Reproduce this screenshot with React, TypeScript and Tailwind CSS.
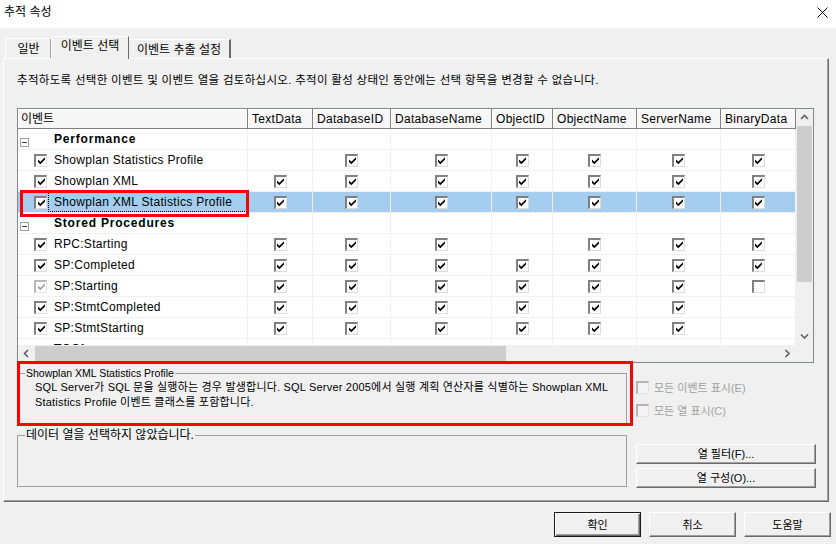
import React from "react";

type Cell = 0 | 1 | 2; // 0 = nothing, 1 = checked, 2 = empty box

type Row =
  | { kind: "cat"; label: string }
  | { kind: "ev"; label: string; cells: Cell[]; selected?: boolean; muted?: boolean };

const COLUMNS = [
  { name: "TextData", width: "w-[65px]" },
  { name: "DatabaseID", width: "w-[78px]" },
  { name: "DatabaseName", width: "w-[101px]" },
  { name: "ObjectID", width: "w-[61px]" },
  { name: "ObjectName", width: "w-[84px]" },
  { name: "ServerName", width: "w-[84px]" },
  { name: "BinaryData", width: "w-[75px]" },
];

const ROWS: Row[] = [
  { kind: "cat", label: "Performance" },
  { kind: "ev", label: "Showplan Statistics Profile", cells: [0, 1, 1, 1, 1, 1, 1] },
  { kind: "ev", label: "Showplan XML", cells: [1, 1, 1, 1, 1, 1, 1] },
  { kind: "ev", label: "Showplan XML Statistics Profile", cells: [1, 1, 1, 1, 1, 1, 1], selected: true },
  { kind: "cat", label: "Stored Procedures" },
  { kind: "ev", label: "RPC:Starting", cells: [1, 1, 1, 0, 1, 1, 1] },
  { kind: "ev", label: "SP:Completed", cells: [1, 1, 1, 1, 1, 1, 1] },
  { kind: "ev", label: "SP:Starting", cells: [1, 1, 1, 1, 1, 1, 2], muted: true },
  { kind: "ev", label: "SP:StmtCompleted", cells: [1, 1, 1, 1, 1, 1, 0] },
  { kind: "ev", label: "SP:StmtStarting", cells: [1, 1, 1, 1, 1, 1, 0] },
  { kind: "cat", label: "TSQL" },
];

function Check({ checked = true, muted = false }: { checked?: boolean; muted?: boolean }) {
  return (
    <span
      className={`flex h-[13px] w-[13px] shrink-0 items-center justify-center border-b border-l-2 border-r border-t-2 bg-white ${
        muted
          ? "border-b-[#e6e6e6] border-l-[#b9b9b9] border-r-[#e6e6e6] border-t-[#b9b9b9]"
          : "border-b-[#dcdcdc] border-l-[#808080] border-r-[#dcdcdc] border-t-[#808080]"
      }`}
    >
      {checked && (
        <svg width="9" height="9" viewBox="0 0 9 9">
          <path d="M1 3.6 L3.3 5.8 L8 1.2 L8 3.6 L3.3 8.2 L1 5.9 Z" fill={muted ? "#a0a0a0" : "#000"} />
        </svg>
      )}
    </span>
  );
}

function DisabledCheck({ label }: { label: string }) {
  return (
    <div className="flex h-[13px] items-center">
      <span className="h-[13px] w-[13px] shrink-0 border-b border-l-2 border-r border-t-2 border-b-[#e3e3e3] border-l-[#b4b4b4] border-r-[#e3e3e3] border-t-[#b4b4b4] bg-[#f4f4f4]" />
      <span className="ml-[5px] text-[11px] leading-[14px] text-[#a0a0a0]">{label}</span>
    </div>
  );
}

function Chevron({ dir }: { dir: "up" | "down" | "left" | "right" }) {
  const d = {
    up: "M1 5 L4.5 1.5 L8 5",
    down: "M1 1.5 L4.5 5 L8 1.5",
    left: "M5 1 L1.5 4.5 L5 8",
    right: "M1.5 1 L5 4.5 L1.5 8",
  }[dir];
  const vertical = dir === "up" || dir === "down";
  return (
    <svg width={vertical ? 9 : 7} height={vertical ? 7 : 9} viewBox={vertical ? "0 0 9 7" : "0 0 7 9"}>
      <path d={d} fill="none" stroke="#606060" strokeWidth="1.6" />
    </svg>
  );
}

function Button({ label, isDefault = false, className = "" }: { label: string; isDefault?: boolean; className?: string }) {
  return (
    <button
      type="button"
      className={`flex items-center justify-center bg-[#f0f0f0] text-[11px] leading-[14px] text-black ${
        isDefault
          ? "border border-[#1a1a1a] shadow-[inset_1px_1px_0_#ffffff,inset_-1px_-1px_0_#696969,inset_-2px_-2px_0_#a0a0a0]"
          : "border border-b-[#696969] border-l-white border-r-[#696969] border-t-white shadow-[inset_-1px_-1px_0_#a0a0a0]"
      } ${className}`}
    >
      {label}
    </button>
  );
}

function ExpandBox() {
  return (
    <span className="mt-[6px] flex h-[9px] w-[9px] shrink-0 items-center justify-center border border-[#a0a0a0] bg-white">
      <span className="h-px w-[5px] bg-[#404040]" />
    </span>
  );
}

function GridRow({ row }: { row: Row }) {
  if (row.kind === "cat") {
    return (
      <div className="flex h-[21px] shrink-0 border-b border-[#f0f0f0]">
        <div className="flex w-[230px] items-center border-r border-[#f0f0f0]">
          <span className="ml-[2px]">
            <ExpandBox />
          </span>
          <span className="ml-[25px] text-[12px] font-bold tracking-[0.8px]">{row.label}</span>
        </div>
        {COLUMNS.map((c) => (
          <div key={c.name} className={`${c.width} border-r border-[#f0f0f0]`} />
        ))}
      </div>
    );
  }

  return (
    <div className={`flex h-[21px] shrink-0 border-b border-[#f0f0f0] ${row.selected ? "bg-[#a4cdef]" : ""}`}>
      <div className="flex w-[230px] items-center border-r border-[#f0f0f0]">
        <span className="ml-[16px]">
          <Check muted={row.muted} />
        </span>
        <span
          className={`ml-[1px] flex h-full flex-1 items-center pl-[5px] text-[12px] tracking-[0.3px] ${
            row.selected ? "border border-dotted border-black" : "border border-transparent"
          }`}
        >
          {row.label}
        </span>
      </div>
      {COLUMNS.map((c, i) => (
        <div key={c.name} className={`${c.width} flex items-center justify-center border-r border-[#f0f0f0]`}>
          {row.cells[i] === 1 && <Check />}
          {row.cells[i] === 2 && <Check checked={false} />}
        </div>
      ))}
    </div>
  );
}

function EventGrid() {
  return (
    <div className="ml-[13px] mt-[20px] flex h-[255px] w-[797px] flex-col border border-[#828790] bg-white">
      <div className="flex h-[236px]">
        <div className="flex w-[778px] flex-col overflow-hidden">
          <div className="flex h-[20px] shrink-0 bg-[#f0f0f0]">
            <div className="flex w-[230px] items-center border-b border-r border-[#808080] bg-[#f7f7f7] pl-[3px] text-[12px] shadow-[inset_1px_1px_0_#ffffff]">
              이벤트
            </div>
            {COLUMNS.map((c) => (
              <div
                key={c.name}
                className={`${c.width} flex items-center border-b border-r border-[#808080] bg-[#f7f7f7] pl-[4px] text-[12px] tracking-[0.3px] shadow-[inset_1px_1px_0_#ffffff]`}
              >
                {c.name}
              </div>
            ))}
          </div>
          {ROWS.map((row) => (
            <GridRow key={row.label} row={row} />
          ))}
        </div>
        <div className="flex w-[17px] flex-col bg-[#f0f0f0]">
          <div className="flex h-[17px] items-center justify-center">
            <Chevron dir="up" />
          </div>
          <div className="mx-[1px] h-[156px] bg-[#cdcdcd]" />
          <div className="flex-1" />
          <div className="flex h-[17px] items-center justify-center">
            <Chevron dir="down" />
          </div>
        </div>
      </div>
      <div className="flex h-[17px] bg-[#f0f0f0]">
        <div className="flex w-[778px] items-center">
          <div className="flex h-[17px] w-[17px] items-center justify-center">
            <Chevron dir="left" />
          </div>
          <div className="h-[15px] w-[471px] bg-[#cdcdcd]" />
          <div className="flex-1" />
          <div className="flex h-[17px] w-[17px] items-center justify-center">
            <Chevron dir="right" />
          </div>
        </div>
        <div className="w-[17px] bg-[#f0f0f0]" />
      </div>
    </div>
  );
}

export default function App() {
  return (
    <div className="relative flex h-[544px] w-[836px] flex-col overflow-hidden bg-[#f0f0f0] font-['Liberation_Sans','Noto_Sans_CJK_KR',sans-serif] text-black">
      {/* title bar */}
      <div className="flex h-[28px] shrink-0 items-start justify-between bg-white pl-[4px] pr-[8px] pt-[3px]">
        <span className="text-[12px] leading-[18px]">추적 속성</span>
        <svg width="11" height="11" viewBox="0 0 11 11" className="mt-[4px]">
          <path d="M0.5 0.5 L10.5 10.5 M10.5 0.5 L0.5 10.5" stroke="#000" strokeWidth="1" />
        </svg>
      </div>

      {/* tabs */}
      <div className="flex h-[30px] shrink-0 items-end pl-[5px]">
        <div className="flex h-[20px] w-[46px] items-center justify-center border-l border-t border-white pt-[1px] text-[12px] leading-[16px] shadow-[inset_-1px_0_0_#a0a0a0]">
          일반
        </div>
        <div className="relative z-10 -mb-px flex h-[23px] w-[78px] items-start justify-center border-l border-r border-t border-l-white border-r-[#696969] border-t-white bg-[#f0f0f0] pt-[1px] text-[12px] leading-[16px]">
          이벤트 선택
        </div>
        <div className="flex h-[19px] w-[102px] items-center justify-center border-r-2 border-t border-r-[#696969] border-t-white pt-[1px] text-[12px] leading-[16px]">
          이벤트 추출 설정
        </div>
      </div>

      {/* tab panel */}
      <div className="ml-[3px] flex h-[444px] w-[826px] shrink-0 flex-col border-b border-l border-r border-t border-b-[#696969] border-l-white border-r-[#696969] border-t-white shadow-[inset_-1px_-1px_0_#a0a0a0]">
        <div className="mt-[14px] h-[15px] whitespace-nowrap pl-[13px] text-[11.5px] leading-[15px] tracking-[0.3px]">
          추적하도록 선택한 이벤트 및 이벤트 열을 검토하십시오. 추적이 활성 상태인 동안에는 선택 항목을 변경할 수 없습니다.
        </div>

        <EventGrid />

        <div className="ml-[13px] flex gap-[9px]">
          <div className="flex w-[610px] flex-col">
            <fieldset className="mt-[3px] h-[58px] border border-[#a0a0a0]">
              <legend className="ml-[7px] px-[1px] text-[10.5px] leading-[14px]">Showplan XML Statistics Profile</legend>
              <div className="whitespace-nowrap pl-[17px] text-[11px] leading-[15px] tracking-[0.2px]">
                SQL Server가 SQL 문을 실행하는 경우 발생합니다. SQL Server 2005에서 실행 계획 연산자를 식별하는 Showplan XML
                <br />
                Statistics Profile 이벤트 클래스를 포함합니다.
              </div>
            </fieldset>
            <fieldset className="mt-[4px] h-[59px] border border-[#a0a0a0]">
              <legend className="ml-[7px] px-[1px] text-[12px] leading-[14px]">데이터 열을 선택하지 않았습니다.</legend>
            </fieldset>
          </div>

          <div className="flex w-[180px] flex-col">
            <div className="mt-[18px]">
              <DisabledCheck label="모든 이벤트 표시(E)" />
            </div>
            <div className="mt-[10px]">
              <DisabledCheck label="모든 열 표시(C)" />
            </div>
            <Button label="열 필터(F)..." className="mt-[27px] h-[20px] w-[180px]" />
            <Button label="열 구성(O)..." className="mt-[4px] h-[20px] w-[180px]" />
          </div>
        </div>
      </div>

      {/* dialog buttons */}
      <div className="mt-[10px] flex justify-end gap-[8px] pr-[5px]">
        <Button label="확인" isDefault className="h-[25px] w-[87px]" />
        <Button label="취소" className="h-[25px] w-[87px]" />
        <Button label="도움말" className="h-[25px] w-[87px]" />
      </div>

      {/* red annotation marks */}
      <div className="pointer-events-none absolute left-[20px] top-[190px] h-[27px] w-[229px] border-[3px] border-[#ff0000]" />
      <div className="pointer-events-none absolute left-[17px] top-[361px] h-[65px] w-[616px] border-[3px] border-[#ff0000]" />
    </div>
  );
}
